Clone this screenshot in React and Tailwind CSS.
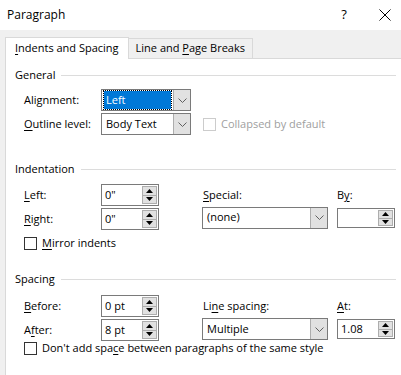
import React from 'react';

const font = { fontFamily: '"Open Sans", "Noto Sans", sans-serif' };

const U = ({ children }) => <span className="underline underline-offset-2">{children}</span>;

const Chevron = () => (
  <svg width="9" height="5" viewBox="0 0 9 5" className="block">
    <polyline points="0.5,0.5 4.5,4.5 8.5,0.5" fill="none" stroke="#606060" strokeWidth="1" />
  </svg>
);

const Select = ({ value, width, selected }) => (
  <div className={`flex h-[22px] border border-[#7a7a7a] bg-white ${width}`}>
    <div className="flex-1 flex items-center px-[2px]">
      {selected ? (
        <div className="flex items-center h-[18px] w-full bg-[#0078d7] text-white px-[2px] outline-1 outline-dotted outline-[#000]">
          {value}
        </div>
      ) : (
        <span className="px-[2px] text-[#000]">{value}</span>
      )}
    </div>
    <div className="w-[17px] flex items-center justify-center bg-[#e1e1e1] border-l border-[#adadad]">
      <Chevron />
    </div>
  </div>
);

const Spin = ({ value, width = 'w-[58px]', h = 'h-[22px]' }) => (
  <div className={`flex ${h} ${width} border border-[#7a7a7a] bg-white`}>
    <div className="flex-1 flex items-center pl-[3px] text-[#000]">{value}</div>
    <div className="w-[15px] my-[1px] mr-[1px] flex flex-col border border-[#adadad] bg-[#e1e1e1]">
      <div className="flex-1 flex items-center justify-center border-b border-[#adadad]">
        <svg width="7" height="4" viewBox="0 0 7 4"><polygon points="3.5,0 7,4 0,4" fill="#000" /></svg>
      </div>
      <div className="flex-1 flex items-center justify-center">
        <svg width="7" height="4" viewBox="0 0 7 4"><polygon points="0,0 7,0 3.5,4" fill="#000" /></svg>
      </div>
    </div>
  </div>
);

const Check = ({ disabled }) => (
  <div className={`w-[13px] h-[13px] border bg-white ${disabled ? 'border-[#cccccc]' : 'border-[#333333]'}`} />
);

const Section = ({ title, children }) => (
  <div>
    <div className="flex items-center h-[18px] pl-[9px] pr-[5px]">
      <span className="text-[#000]">{title}</span>
      <div className="flex-1 h-px bg-[#dcdcdc] ml-[6px]" />
    </div>
    {children}
  </div>
);

export default function App() {
  return (
    <div style={font} className="w-[401px] h-[375px] bg-[#f0f0f0] text-[11px] text-black overflow-hidden flex flex-col">
      {/* Title bar */}
      <div className="h-[30px] bg-white flex items-center pl-[7px] shrink-0">
        <span className="text-[12px] flex-1">Paragraph</span>
        <span className="text-[13px] w-[20px] text-center mr-[25px]">?</span>
        <svg width="12" height="12" viewBox="0 0 12 12" className="mr-[10px]">
          <path d="M0.5 0.5 L11.5 11.5 M11.5 0.5 L0.5 11.5" stroke="#000" strokeWidth="1" />
        </svg>
      </div>

      {/* Tabs */}
      <div className="flex items-end pl-[5px] pt-[7px] shrink-0">
        <div className="h-[22px] px-[9px] flex items-center bg-white border border-b-0 border-[#d9d9d9] relative z-10 -mb-px">
          <span><U>I</U>ndents and Spacing</span>
        </div>
        <div className="h-[20px] px-[7px] flex items-center bg-[#f0f0f0] border border-l-0 border-b-0 border-[#d9d9d9]">
          <span>Line and <U>P</U>age Breaks</span>
        </div>
      </div>

      {/* Panel */}
      <div className="flex-1 ml-[5px] bg-white border-l border-t border-[#d9d9d9] pt-[7px]">
        <Section title="General">
          <div className="pl-[18px] mt-[5px] flex flex-col gap-[2px]">
            <div className="flex items-center h-[22px]">
              <span className="w-[77px]">Alignment:</span>
              <Select value="Left" width="w-[90px]" selected />
            </div>
            <div className="flex items-center h-[22px]">
              <span className="w-[77px]"><U>O</U>utline level:</span>
              <Select value="Body Text" width="w-[90px]" />
              <div className="ml-[12px] flex items-center gap-[5px] text-[#a0a0a0]">
                <Check disabled />
                <span>Collapsed by default</span>
              </div>
            </div>
          </div>
        </Section>

        <div className="mt-[25px]">
          <Section title="Indentation">
            <div className="pl-[18px] mt-[6px] flex flex-col gap-[2px]">
              <div className="flex items-center h-[22px]">
                <span className="w-[77px]"><U>L</U>eft:</span>
                <Spin value={'0"'} />
                <span className="ml-[44px] w-[134px]"><U>S</U>pecial:</span>
                <span>B<U>y</U>:</span>
              </div>
              <div className="flex items-center h-[22px]">
                <span className="w-[77px]"><U>R</U>ight:</span>
                <Spin value={'0"'} />
                <div className="ml-[43px] -mt-[3px]">
                  <Select value="(none)" width="w-[126px]" />
                </div>
                <div className="ml-[9px] -mt-[2px]">
                  <Spin value="" h="h-[20px]" />
                </div>
              </div>
              <div className="flex items-center h-[20px] mt-[1px] gap-[5px]">
                <Check />
                <span><U>M</U>irror indents</span>
              </div>
            </div>
          </Section>
        </div>

        <div className="mt-[17px]">
          <Section title="Spacing">
            <div className="pl-[18px] mt-[7px] flex flex-col gap-[2px]">
              <div className="flex items-center h-[22px]">
                <span className="w-[77px]"><U>B</U>efore:</span>
                <Spin value="0 pt" />
                <span className="ml-[44px] w-[134px]">Li<U>n</U>e spacing:</span>
                <span><U>A</U>t:</span>
              </div>
              <div className="flex items-center h-[22px]">
                <span className="w-[77px]">A<U>f</U>ter:</span>
                <Spin value="8 pt" />
                <div className="ml-[43px] -mt-[2px]">
                  <Select value="Multiple" width="w-[126px]" />
                </div>
                <div className="ml-[9px] -mt-[2px]">
                  <Spin value="1.08" h="h-[20px]" />
                </div>
              </div>
              <div className="flex items-center h-[16px] -mt-[3px] gap-[5px]">
                <Check />
                <span>Don't add spa<U>c</U>e between paragraphs of the same style</span>
              </div>
            </div>
          </Section>
        </div>
      </div>
    </div>
  );
}
